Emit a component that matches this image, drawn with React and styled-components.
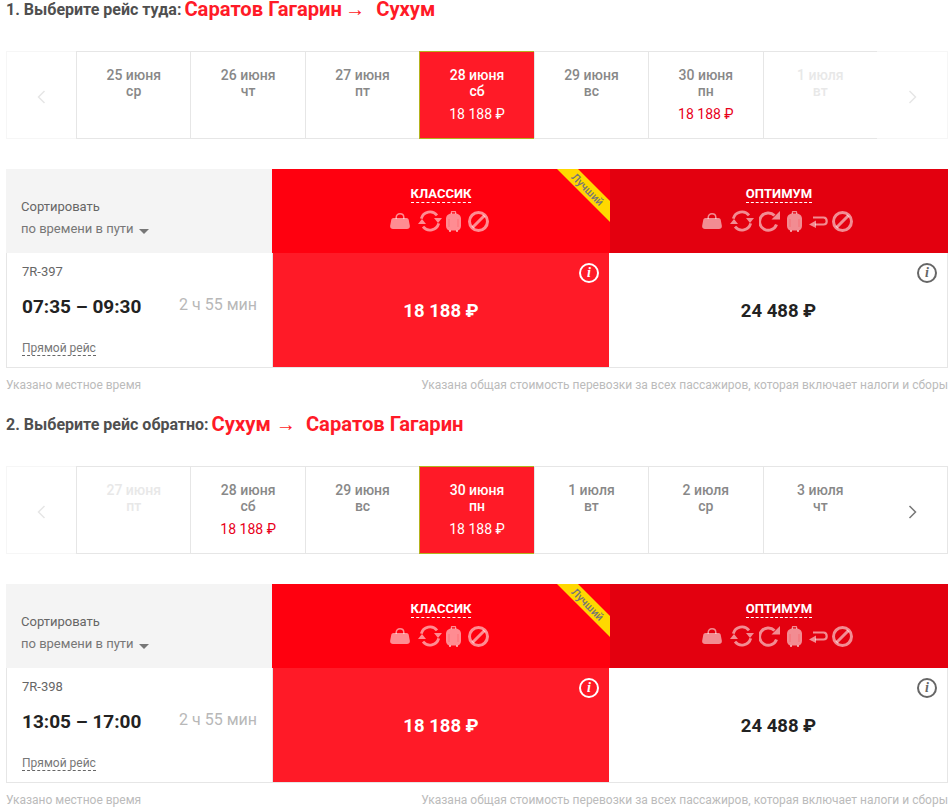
import styled, { createGlobalStyle } from 'styled-components'

const RED = '#ff1a27'

const GlobalStyle = createGlobalStyle`
	html, body {
		margin: 0;
		padding: 0;
		background: #fff;
		overflow: hidden;
	}

	body {
		font-family: Roboto, "Liberation Sans", sans-serif;
	}
`

const Bag = (props) => (
	<Glyph width='20' height='16' viewBox='0 0 20 16' {...props}>
		<path d='M6.200 6V4.400C6.200 2.300 7.800.8 10 .8s3.800 1.500 3.800 3.600V6' fill='none' stroke='currentColor' strokeWidth='1.500' />
		<path d='M3.500 5h13c1.200 0 1.900.7 2.200 1.800l1.100 5.700c.4 2-.9 3.500-2.800 3.500H3c-1.900 0-3.200-1.500-2.800-3.500l1.100-5.700C1.600 5.700 2.300 5 3.500 5z' fill='currentColor' />
	</Glyph>
)

const Recycle = (props) => (
	<Glyph width='24' height='22' viewBox='0 0 24 22' {...props}>
		<path d='M3.300 8.600A9 9 0 0 1 19 5.300M20.700 13.400A9 9 0 0 1 5 16.700' fill='none' stroke='currentColor' strokeWidth='2.800' />
		<path d='M16 8h8l-4 5zM8 14H0l4-5z' fill='currentColor' />
	</Glyph>
)

const Redo = (props) => (
	<Glyph width='21' height='22' viewBox='0 0 21 22' {...props}>
		<path d='M17.500 14.500A8.700 8.700 0 1 1 15.500 5.500' fill='none' stroke='currentColor' strokeWidth='3' />
		<path d='M12.500 9.500H21V1z' fill='currentColor' />
	</Glyph>
)

const Suitcase = (props) => (
	<Glyph width='15' height='21' viewBox='0 0 15 21' {...props}>
		<path d='M4.800 3V1.200C4.800.5 5.300 0 6 0h3c.7 0 1.200.5 1.200 1.200V3H9V1.300H6V3z' fill='currentColor' />
		<path d='M5.500 2.500h4c3.200 0 5.500 2.300 5.500 5.500v7c0 2.600-1.600 4.500-4.200 4.500H4.200C1.600 19.500 0 17.600 0 15V8c0-3.200 2.300-5.500 5.500-5.500z' fill='currentColor' />
		<path d='M3 19h2v2H3zM10 19h2v2h-2z' fill='currentColor' />
		<path d='M3 8v8M12 8v8' stroke='#ff000f' strokeOpacity='.2' strokeWidth='1' />
	</Glyph>
)

const Back = (props) => (
	<Glyph width='19' height='13' viewBox='0 0 19 13' {...props}>
		<path d='M6 9.500h8.500c2 0 3.200-1.300 3.200-3.300S16.500 2.500 14.500 2.500H4' fill='none' stroke='currentColor' strokeWidth='2.200' />
		<path d='M7 5.500L0 9.500l7 3.500z' fill='currentColor' />
	</Glyph>
)

const Ban = (props) => (
	<Glyph width='21' height='21' viewBox='0 0 21 21' {...props}>
		<circle cx='10.500' cy='10.500' r='9' fill='none' stroke='currentColor' strokeWidth='3' />
		<path d='M4.500 16.500l12-12' stroke='currentColor' strokeWidth='3' />
	</Glyph>
)

const DateCell = ({ day, weekday, price, active, disabled }) => (
	<Cell $active={active} $disabled={disabled}>
		<div>{ day }</div>
		<div>{ weekday }</div>
		{ price && <CellPrice $active={active}>{ price }</CellPrice> }
	</Cell>
)

const Section = ({ number, label, from, to, arrowGaps, dates, prevOff, nextOff, flight, times }) => (
	<section>
		<Heading>
			{ number }. { label }
			<Route>
				<span>{ from }</span>
				<Arrow $before={arrowGaps[0]} $after={arrowGaps[1]}>→</Arrow>
				<span>{ to }</span>
			</Route>
		</Heading>

		<DateBar>
			<Nav $off={prevOff} $side='left'>
				<svg width='11' height='16' viewBox='0 0 11 16'><path d='M8.500 2L2.500 8l6 6' fill='none' stroke='currentColor' strokeWidth='1.500' /></svg>
			</Nav>
			{ dates.map(date => <DateCell key={date.day} {...date} />) }
			<Nav $off={nextOff} $side='right'>
				<svg width='11' height='16' viewBox='0 0 11 16'><path d='M2.500 2l6 6-6 6' fill='none' stroke='currentColor' strokeWidth='1.500' /></svg>
			</Nav>
		</DateBar>

		<TableHead>
			<SortBox>
				<SortTitle>Сортировать</SortTitle>
				<SortValue>по времени в пути<Caret /></SortValue>
			</SortBox>
			<Tariff $bg='#ff000f'>
				<TariffName>КЛАССИК</TariffName>
				<Icons>
					<Bag />
					<Recycle $ml={8} />
					<Suitcase $ml={4} />
					<Ban $ml={7} />
				</Icons>
				<Ribbon><span>Лучший</span></Ribbon>
			</Tariff>
			<Tariff $bg='#e3000f'>
				<TariffName>ОПТИМУМ</TariffName>
				<Icons>
					<Bag />
					<Recycle $ml={8} />
					<Redo $ml={5} />
					<Suitcase $ml={7} />
					<Back $ml={7} />
					<Ban $ml={4} />
				</Icons>
			</Tariff>
		</TableHead>

		<FlightRow>
			<FlightInfo>
				<FlightNumber>{ flight }</FlightNumber>
				<TimeLine>
					<Times>{ times }</Times>
					<Duration>2 ч 55 мин</Duration>
				</TimeLine>
				<Direct><span>Прямой рейс</span></Direct>
			</FlightInfo>
			<Price $best>
				18 188 ₽
				<Info $best>i</Info>
			</Price>
			<Price>
				24 488 ₽
				<Info>i</Info>
			</Price>
		</FlightRow>

		<Notes>
			<span>Указано местное время</span>
			<span>Указана общая стоимость перевозки за всех пассажиров, которая включает налоги и сборы</span>
		</Notes>
	</section>
)

const App = () => (
	<>
		<GlobalStyle />
		<Page>
			<Section
				number={1}
				label='Выберите рейс туда:'
				from='Саратов Гагарин'
				to='Сухум'
				arrowGaps={[3, 11]}
				prevOff
				nextOff
				flight='7R-397'
				times='07:35 – 09:30'
				dates={[
					{ day: '25 июня', weekday: 'ср' },
					{ day: '26 июня', weekday: 'чт' },
					{ day: '27 июня', weekday: 'пт' },
					{ day: '28 июня', weekday: 'сб', price: '18 188 ₽', active: true },
					{ day: '29 июня', weekday: 'вс' },
					{ day: '30 июня', weekday: 'пн', price: '18 188 ₽' },
					{ day: '1 июля', weekday: 'вт', disabled: true },
				]}
			/>
			<Section
				number={2}
				label='Выберите рейс обратно:'
				from='Сухум'
				to='Саратов Гагарин'
				arrowGaps={[5, 10]}
				prevOff
				flight='7R-398'
				times='13:05 – 17:00'
				dates={[
					{ day: '27 июня', weekday: 'пт', disabled: true },
					{ day: '28 июня', weekday: 'сб', price: '18 188 ₽' },
					{ day: '29 июня', weekday: 'вс' },
					{ day: '30 июня', weekday: 'пн', price: '18 188 ₽', active: true },
					{ day: '1 июля', weekday: 'вт' },
					{ day: '2 июля', weekday: 'ср' },
					{ day: '3 июля', weekday: 'чт' },
				]}
			/>
		</Page>
	</>
)

const Page = styled.main`
	width: 942px;
	margin-left: 6px;
	display: flex;
	flex-direction: column;
	gap: 21px;
`

const Heading = styled.h2`
	display: flex;
	align-items: center;
	height: 18px;
	margin: 0 0 32px;
	padding-top: 1px;
	font-size: 16px;
	font-weight: 700;
	line-height: 18px;
	color: #4f4f4f;
	white-space: pre;
`

const Route = styled.span`
	display: flex;
	margin: 0 0 2px 3px;
	font-size: 20.2px;
	font-weight: 700;
	color: ${RED};
`

const Arrow = styled.span`
	margin: 0 ${({$after}) => $after}px 0 ${({$before}) => $before}px;
`

const DateBar = styled.div`
	display: grid;
	grid-template-columns: 70px repeat(7, 1fr) 71px;
	height: 88px;
	margin-bottom: 30px;
`

const Nav = styled.div`
	display: flex;
	align-items: center;
	justify-content: center;
	box-sizing: border-box;
	border: 1px solid ${({$off}) => ($off ? '#f6f6f6' : '#e6e6e6')};
	border-${({$side}) => ($side === 'left' ? 'right' : 'left')}: 0;
	color: ${({$off}) => ($off ? '#e6e6e6' : '#777')};
	padding-top: 3px;
`

const Cell = styled.div`
	box-sizing: border-box;
	padding-top: 15px;
	border: 1px solid ${({$active}) => ($active ? '#b3b31e' : '#e6e6e6')};
	border-right: 0;
	background: ${({$active}) => ($active ? RED : '#fff')};
	color: ${({$active, $disabled}) => ($active ? '#fff' : $disabled ? '#e8e8e8' : '#888')};
	font-size: 14px;
	font-weight: 500;
	line-height: 16px;
	text-align: center;
`

const CellPrice = styled.div`
	margin-top: 7px;
	color: ${({$active}) => ($active ? '#fff' : '#e8001a')};
	font-weight: 400;
`

const TableHead = styled.div`
	display: grid;
	grid-template-columns: 266px 338px 338px;
	height: 84px;
`

const SortBox = styled.div`
	box-sizing: border-box;
	padding: 29px 15px 0;
	background: #f4f4f4;
	font-size: 13px;
	line-height: 18px;
`

const SortTitle = styled.div`
	color: #666;
`

const SortValue = styled.div`
	display: flex;
	align-items: center;
	margin-top: 4px;
	color: #777;
`

const Caret = styled.i`
	width: 0;
	height: 0;
	margin: 5px 0 0 5px;
	border: 5px solid transparent;
	border-top: 5px solid #777;
	border-bottom: 0;
`

const Tariff = styled.div`
	position: relative;
	overflow: hidden;
	display: flex;
	flex-direction: column;
	align-items: center;
	padding-top: 17px;
	background: ${({$bg}) => $bg};
	color: rgba(255, 255, 255, 0.55);
`

const TariffName = styled.div`
	height: 16px;
	border-bottom: 1px dashed #fff;
	color: #fff;
	font-size: 13px;
	font-weight: 700;
	line-height: 16px;
`

const Icons = styled.div`
	display: flex;
	align-items: center;
	height: 22px;
	margin: 7px 3px 0 0;
`

const Glyph = styled.svg`
	display: block;
	flex: none;
	margin-left: ${({$ml}) => $ml || 0}px;
`

const Ribbon = styled.div`
	position: absolute;
	top: 0;
	right: 0;
	width: 53px;
	height: 53px;
	background: #ffd800;
	clip-path: polygon(0 0, 21px 0, 53px 32px, 53px 53px);

	span {
		position: absolute;
		top: 14px;
		left: 6px;
		width: 48px;
		transform: rotate(45deg);
		color: #777;
		font-size: 11px;
		font-weight: 500;
		line-height: 14px;
		text-align: center;
	}
`

const FlightRow = styled.div`
	display: grid;
	grid-template-columns: 266px 337px 1fr;
	box-sizing: border-box;
	height: 115px;
	border: 1px solid #e6e6e6;
	border-top: 0;
`

const FlightInfo = styled.div`
	box-sizing: border-box;
	padding: 11px 15px 0 15px;
	border-right: 1px solid #e6e6e6;
`

const FlightNumber = styled.div`
	color: #666;
	font-size: 13px;
	line-height: 16px;
`

const TimeLine = styled.div`
	display: flex;
	justify-content: space-between;
	align-items: center;
	margin-top: 12px;
	height: 28px;
`

const Times = styled.div`
	color: #222;
	font-size: 19px;
	font-weight: 700;
`

const Duration = styled.div`
	color: #b8b8b8;
	font-size: 16px;
	padding-bottom: 3px;
`

const Direct = styled.div`
	margin-top: 21px;
	color: #777;
	font-size: 12px;
	line-height: 14px;

	span {
		display: inline-block;
		border-bottom: 1px dashed #666;
	}
`

const Price = styled.div`
	position: relative;
	display: flex;
	align-items: center;
	justify-content: center;
	margin-right: ${({$best}) => ($best ? '1px' : 0)};
	padding-top: 2px;
	background: ${({$best}) => ($best ? RED : '#fff')};
	color: ${({$best}) => ($best ? '#fff' : '#222')};
	font-size: 18.5px;
	font-weight: 700;
`

const Info = styled.span`
	position: absolute;
	top: 10px;
	right: 10px;
	box-sizing: border-box;
	width: 20px;
	height: 20px;
	border: 2px solid ${({$best}) => ($best ? '#fff' : '#666')};
	border-radius: 50%;
	color: ${({$best}) => ($best ? '#fff' : '#666')};
	font-family: "Liberation Serif", serif;
	font-size: 14px;
	font-style: italic;
	font-weight: 700;
	line-height: 16px;
	text-align: center;
`

const Notes = styled.div`
	display: flex;
	justify-content: space-between;
	margin-top: 8px;
	color: #bbb;
	font-size: 12px;
	line-height: 18px;
`

export default App
